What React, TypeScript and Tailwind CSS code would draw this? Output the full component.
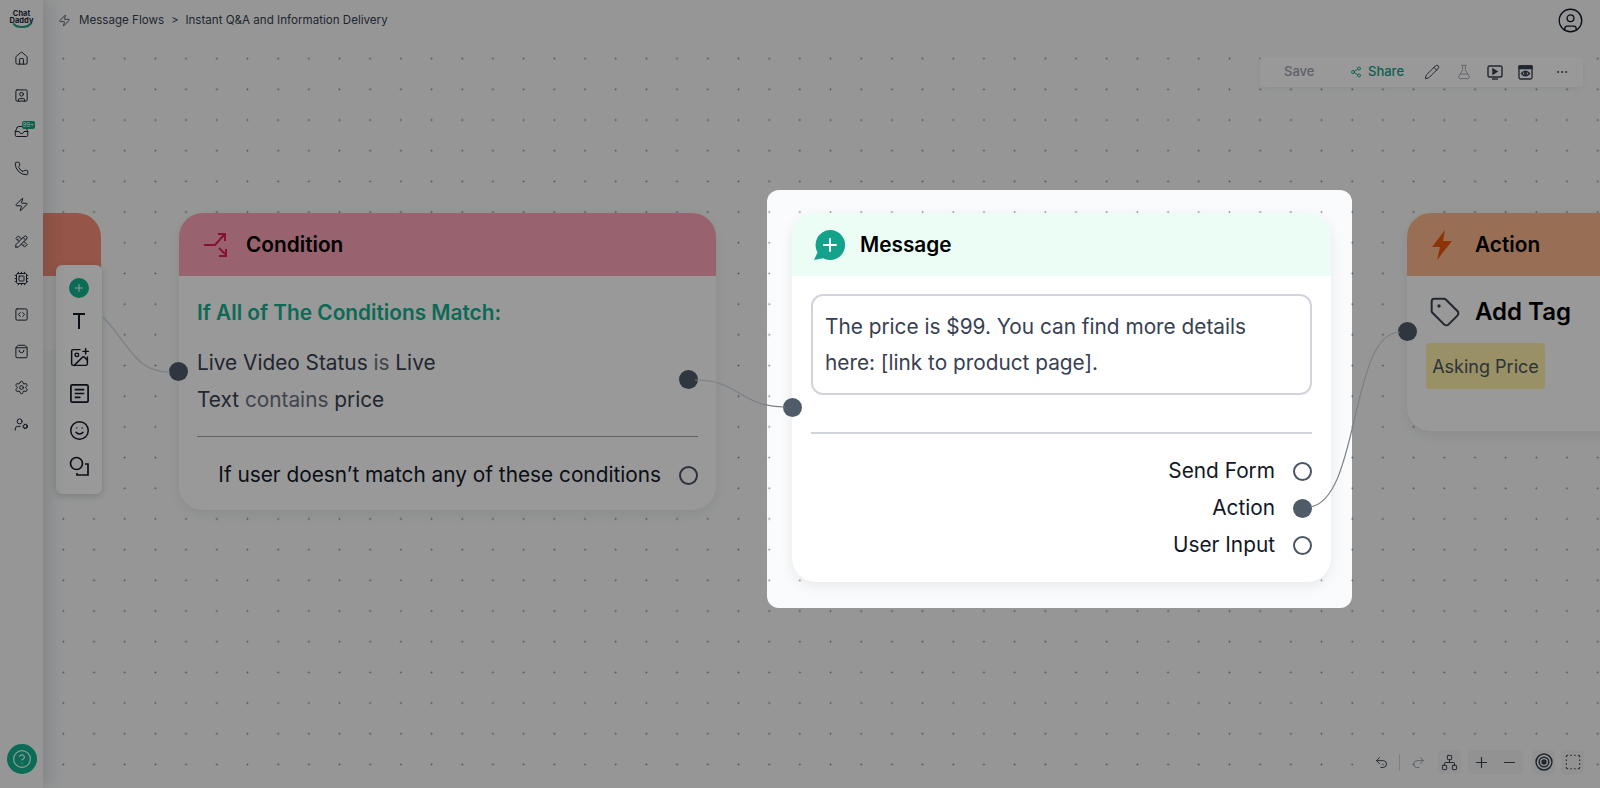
import React from "react";
import {
  House, SquareUser, Inbox, Phone, Zap, Cpu, SquareCode, ShoppingBag, Settings, UserCog,
  Plus, ImagePlus, Smile, Share2, Pencil, FlaskConical, Ellipsis, Undo2, Redo2,
  Network, Minus, SquareDashed, CircleHelp, CircleUser, Tag,
} from "lucide-react";
import { TbTools } from "react-icons/tb";

const font = { fontFamily: '"Inter", "Liberation Sans", sans-serif' };

function Circle({ filled }: { filled?: boolean }) {
  return filled ? (
    <span className="block h-[19px] w-[19px] shrink-0 rounded-full bg-[#4f5b69]" />
  ) : (
    <span className="block h-[19px] w-[19px] shrink-0 rounded-full border-2 border-[#4b5563] bg-white" />
  );
}

function Handle({ className }: { className: string }) {
  return <span className={"absolute h-[19px] w-[19px] rounded-full bg-[#4f5b69] " + className} />;
}

function Sidebar() {
  const items = [House, SquareUser, Inbox, Phone, Zap, TbTools, Cpu, SquareCode, ShoppingBag, Settings, UserCog];
  return (
    <aside className="z-10 flex h-full w-[43px] shrink-0 flex-col items-center bg-[#fafbfc] shadow-[6px_0_18px_rgba(30,41,59,0.14)]">
      <div className="flex h-[40px] w-full flex-col items-center pt-[10px] text-[7.500px] font-bold leading-[7px] text-[#1f2937]">
        <span>Chat</span>
        <span>Daddy</span>
        <svg width="18" height="6" viewBox="0 0 18 6" className="-mt-[1px]">
          <path d="M1 1c2 4 14 4 16 0" fill="none" stroke="#14a085" strokeWidth="2" strokeLinecap="round" />
        </svg>
      </div>
      <nav className="mt-[11px] flex flex-col items-center gap-[21.600px] text-[#1f2937]">
        {items.map((I, i) => (
          <span key={i} className="relative block h-[15px] w-[15px]">
            <I size={15} strokeWidth={1.6} />
            {i === 2 && (
              <span className="absolute -right-[6px] -top-[3px] rounded-[2px] bg-[#10a37f] px-[1px] text-[6px] leading-[8px] text-white">99+</span>
            )}
          </span>
        ))}
      </nav>
      <button className="mb-[14px] mt-auto flex h-[30px] w-[30px] items-center justify-center rounded-full bg-[#12b48f] text-white">
        <CircleHelp size={20} strokeWidth={1.4} />
      </button>
    </aside>
  );
}

function TopBar() {
  return (
    <header className="flex h-[40px] shrink-0 items-center bg-[#fafbfc] pl-[15px] pr-[16px] pt-[1px] text-[11.600px] text-[#374151]">
      <Zap size={13} strokeWidth={1.5} />
      <span className="ml-[8px]">Message Flows</span>
      <span className="ml-[7px] mr-[7px] text-[11px]">&gt;</span>
      <span>Instant Q&amp;A and Information Delivery</span>
      <CircleUser size={27} strokeWidth={1.2} className="ml-auto text-[#111827]" />
    </header>
  );
}

function CanvasToolbar() {
  return (
    <div className="absolute left-[1217px] top-[17px] flex h-[30px] w-[323px] items-center rounded-[4px] bg-white text-[#374151] shadow-[0_2px_6px_rgba(0,0,0,0.06)]">
      <span className="ml-[24px] w-[30px] text-[13px] font-medium text-[#9ca3af]">Save</span>
      <Share2 size={12} strokeWidth={1.8} className="ml-[36px] text-[#14a085]" />
      <span className="ml-[6px] text-[13px] font-medium text-[#14a085]">Share</span>
      <Pencil size={16} strokeWidth={1.5} className="ml-[20px]" />
      <FlaskConical size={16} strokeWidth={1.3} className="ml-[16px] text-[#9ca3af]" />
      <svg width="16" height="15" viewBox="0 0 16 15" className="ml-[15px]" fill="none" stroke="currentColor" strokeWidth="1.4">
        <rect x="1" y="1" width="14" height="11" rx="1.5" />
        <path d="M6 4l4 2.500L6 9z" fill="currentColor" />
        <path d="M5 14h6" />
      </svg>
      <svg width="15" height="15" viewBox="0 0 15 15" className="ml-[15px]" fill="none" stroke="currentColor" strokeWidth="1.3">
        <rect x="1" y="1" width="13" height="13" rx="1.5" />
        <path d="M1 1h13v2.500H1z" fill="currentColor" />
        <path d="M3.500 8.500c2.200-3 5.800-3 8 0c-2.200 3-5.800 3-8 0z" />
        <circle cx="7.500" cy="8.500" r="1" />
      </svg>
      <Ellipsis size={14} strokeWidth={1.5} className="ml-[22px]" />
    </div>
  );
}

function ZoomControls() {
  return (
    <div className="absolute bottom-[14px] left-[1331px] flex h-[24px] items-center text-[#374151]">
      <Undo2 size={15} strokeWidth={1.5} />
      <span className="ml-[10px] h-[17px] w-px bg-[#cbd5e1]" />
      <Redo2 size={15} strokeWidth={1.5} className="ml-[11px] text-[#9ca3af]" />
      <span className="ml-[12px] flex h-[24px] w-[23px] items-center justify-center rounded-[3px] bg-[#f3f4f6]">
        <Network size={17} strokeWidth={1.4} />
      </span>
      <span className="ml-[7px] flex h-[24px] w-[55px] items-center justify-around rounded-[3px] bg-[#f3f4f6]">
        <Plus size={17} strokeWidth={1.6} />
        <Minus size={17} strokeWidth={1.6} />
      </span>
      <span className="ml-[9px] flex h-[24px] w-[23px] items-center justify-center rounded-[3px] bg-[#f3f4f6]">
        <svg width="18" height="18" viewBox="0 0 17 17" fill="none" stroke="currentColor" strokeWidth="1.4">
          <circle cx="8.500" cy="8.500" r="7.500" />
          <circle cx="8.500" cy="8.500" r="4.500" />
          <circle cx="8.500" cy="8.500" r="1.800" fill="currentColor" />
        </svg>
      </span>
      <span className="ml-[6px] flex h-[24px] w-[23px] items-center justify-center rounded-[3px] bg-[#f3f4f6]">
        <SquareDashed size={18} strokeWidth={1.5} />
      </span>
    </div>
  );
}

function ConditionNode() {
  return (
    <div className="absolute left-[136px] top-[173px] h-[297px] w-[537px] rounded-[24px] bg-white shadow-[0_4px_14px_rgba(0,0,0,0.08)]">
      <div className="flex h-[63px] items-center rounded-t-[24px] bg-[#fda4b8] pl-[24px]">
        <svg width="26" height="26" viewBox="0 0 26 26" fill="none" stroke="#e11d54" strokeWidth="2">
          <path d="M1 13h11l9-10" />
          <path d="M15 2h7v7" />
          <path d="M16 16l6 6" />
          <path d="M16 24h7v-7" />
        </svg>
        <span className="ml-[17px] text-[20.800px] font-semibold text-black">Condition</span>
      </div>
      <div className="px-[18px]">
        <p className="mt-[23px] text-[20.800px] font-semibold leading-[28px] text-[#14b08e]">If All of The Conditions Match:</p>
        <p className="mt-[17px] text-[20.800px] leading-[37px] text-[#374151]">
          Live Video Status <span className="text-[#6b7280]">is</span> Live
        </p>
        <p className="text-[20.800px] leading-[37px] text-[#374151]">
          Text <span className="text-[#6b7280]">contains</span> price
        </p>
        <div className="mt-[18px] h-px bg-[#9ca3af]" />
        <div className="mt-[23px] flex items-center justify-end gap-[18px] text-[20.800px] leading-[30px] text-[#111827]">
          <span>If user doesn’t match any of these conditions</span>
          <Circle />
        </div>
      </div>
      <Handle className="-left-[10px] top-[149px]" />
      <Handle className="right-[18px] top-[157px]" />
    </div>
  );
}

function MessageNode() {
  return (
    <div className="absolute left-[749px] top-[173px] h-[369px] w-[539px] rounded-[24px] bg-white shadow-[0_4px_14px_rgba(0,0,0,0.08)]">
      <div className="flex h-[63px] items-center rounded-t-[24px] bg-[#ecfdf5] pl-[21px]">
        <svg width="32" height="32" viewBox="0 0 32 32">
          <path d="M17 1a15 15 0 1 1-7 28.200L1 31l3.500-7.500A15 15 0 0 1 17 1z" fill="#14a38a" />
          <path d="M17 10v12M11 16h12" stroke="#fff" strokeWidth="2" strokeLinecap="round" />
        </svg>
        <span className="ml-[15px] text-[20.800px] font-semibold text-black">Message</span>
      </div>
      <div className="px-[19px]">
        <div className="mt-[18px] h-[101px] rounded-[12px] border-2 border-[#d1d5db] px-[12px] py-[13px] text-[20.800px] leading-[36px] text-[#374151]">
          The price is $99. You can find more details here: [link to product page].
        </div>
        <div className="mt-[37px] h-[2px] bg-[#d1d5db]" />
        <div className="mt-[22px] flex flex-col gap-[7px] text-[20.800px] leading-[30px] text-[#111827]">
          {[["Send Form", false], ["Action", true], ["User Input", false]].map(([t, f]) => (
            <div key={t as string} className="flex items-center justify-end gap-[18px]">
              <span>{t as string}</span>
              <Circle filled={f as boolean} />
            </div>
          ))}
        </div>
      </div>
      <Handle className="-left-[9px] top-[185px]" />
    </div>
  );
}

function ActionNode() {
  return (
    <div className="absolute left-[1364px] top-[173px] h-[218px] w-[260px] rounded-[24px] bg-white shadow-[0_4px_14px_rgba(0,0,0,0.08)]">
      <div className="flex h-[63px] items-center rounded-t-[24px] bg-[#fdba8c] pl-[24px]">
        <svg width="22" height="30" viewBox="0 0 22 30">
          <path d="M14 0L1 17h8l-3 13L21 11h-9z" fill="#ea580c" />
        </svg>
        <span className="ml-[22px] text-[20.800px] font-semibold text-black">Action</span>
      </div>
      <div className="flex items-center pl-[22px] pt-[20px]">
        <Tag size={32} strokeWidth={1.5} className="text-[#374151]" />
        <span className="ml-[14px] text-[24px] font-semibold leading-[30px] text-black">Add Tag</span>
      </div>
      <div className="ml-[19px] mt-[15px] flex h-[46px] w-[119px] items-center justify-center rounded-[4px] bg-[#fff0a8] text-[18px] text-[#4b5563]">
        Asking Price
      </div>
      <Handle className="-left-[9px] top-[109px]" />
    </div>
  );
}

function LeftNode() {
  return (
    <div className="absolute -left-[200px] top-[173px] h-[137px] w-[258px] rounded-[24px] bg-white">
      <div className="h-[63px] rounded-t-[24px] bg-[#f98f7a]" />
      <Handle className="right-[200px] top-[90px] !bg-[#1e3a8a]" />
    </div>
  );
}

function InsertBar() {
  return (
    <div className="absolute left-[13px] top-[225px] z-[1] flex h-[229px] w-[46px] flex-col items-center rounded-[6px] bg-white pt-[13px] text-[#111827] shadow-[0_2px_8px_rgba(0,0,0,0.18)]">
      <span className="flex h-[20px] w-[20px] items-center justify-center rounded-full bg-[#12b48f] text-white">
        <Plus size={12} strokeWidth={2} />
      </span>
      <div className="mt-[12px] flex flex-col items-center gap-[15.500px]">
        <svg width="20" height="21" viewBox="0 0 20 21" fill="none" stroke="currentColor" strokeWidth="2">
          <path d="M4 4h12M10 4v15" />
        </svg>
        <ImagePlus size={21} strokeWidth={1.7} />
        <svg width="21" height="21" viewBox="0 0 22 22" fill="none" stroke="currentColor" strokeWidth="1.800">
          <rect x="2" y="2" width="18" height="18" rx="1.500" />
          <path d="M6 7h10M6 11h10M6 15h6" />
        </svg>
        <Smile size={21} strokeWidth={1.7} />
        <svg width="20" height="20" viewBox="0 0 20 20" fill="none" stroke="currentColor" strokeWidth="1.700">
          <circle cx="7.500" cy="7.500" r="6" />
          <path d="M16 8h3v11H8v-2" />
        </svg>
      </div>
    </div>
  );
}

export default function App() {
  return (
    <div className="relative flex h-[788px] w-[1600px] overflow-hidden bg-white" style={font}>
      <Sidebar />
      <div className="flex min-w-0 flex-1 flex-col">
        <TopBar />
        <main className="relative flex-1 overflow-hidden bg-[#fafbfc] bg-[radial-gradient(circle,#7b818a_0.8px,transparent_1.1px)] bg-[size:30.7px_30.7px] bg-[position:5px_3.300px]">
          <LeftNode />
          <ConditionNode />
          <MessageNode />
          <ActionNode />
          <InsertBar />
          <CanvasToolbar />
          <ZoomControls />
        </main>
      </div>
      {/* tour spotlight: darkens everything except its own box */}
      <div className="absolute left-[767px] top-[190px] z-20 h-[418px] w-[585px] rounded-[12px] shadow-[0_0_0_2000px_rgba(0,0,0,0.4)]" />
      {/* flow edges */}
      <svg className="pointer-events-none absolute left-0 top-0 z-30" width="1600" height="788" fill="none" stroke="#7b7f86" strokeWidth="1.200">
        <path d="M103 317C130 345 135 372 170 372" />
        <path d="M695 380C740 380 740 407 785 407" />
        <path d="M1310 507C1360 500 1350 332 1400 332" />
      </svg>
    </div>
  );
}
